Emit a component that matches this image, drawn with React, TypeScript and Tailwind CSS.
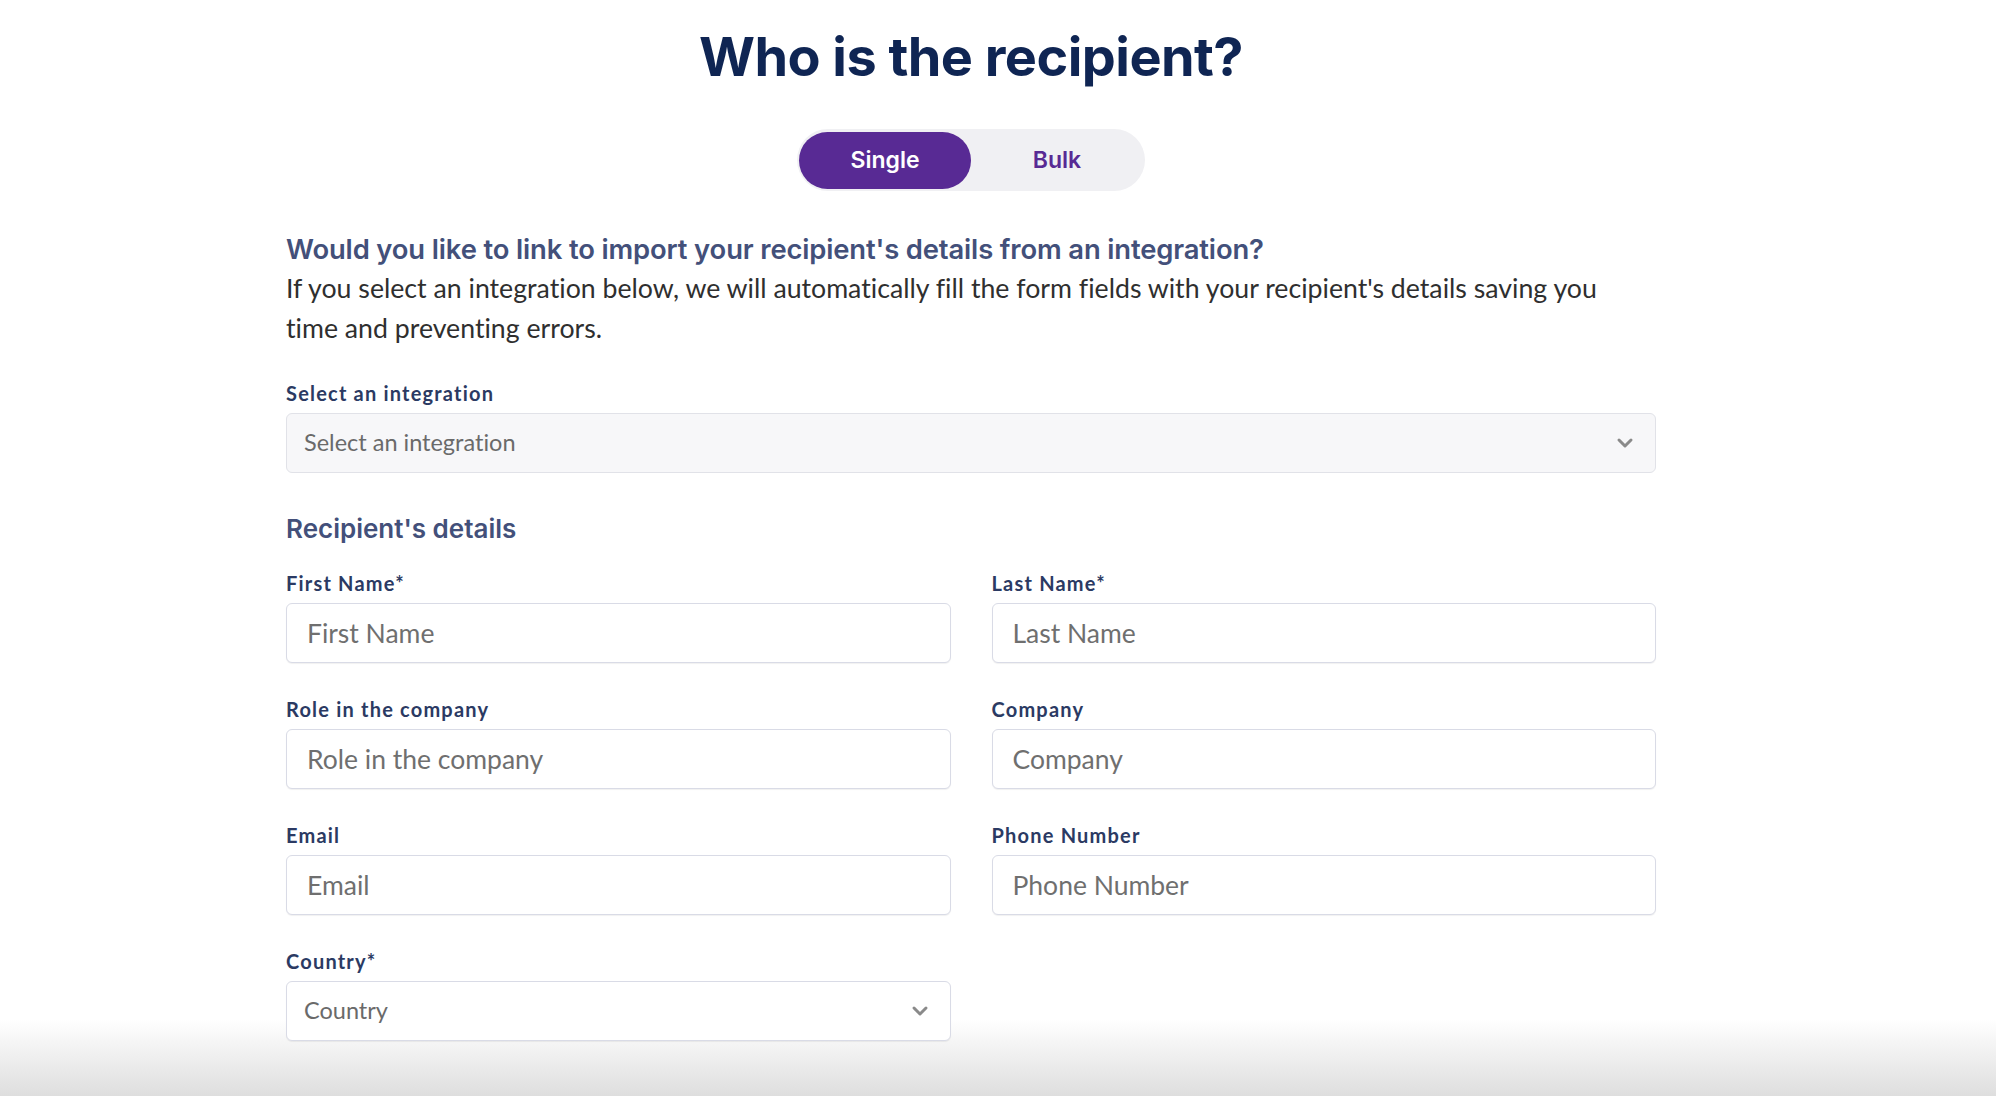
import { ChevronDown } from "lucide-react";

const heading = { fontFamily: "Inter, 'Noto Sans', sans-serif" };
const body = { fontFamily: "Lato, 'Liberation Sans', sans-serif", fontVariantLigatures: "none" as const };

function Field({ label, placeholder }: { label: string; placeholder: string }) {
  return (
    <div className="flex flex-col gap-[9px]">
      <label style={body} className="text-[20px] font-bold tracking-[0.06em] text-[#2b3a63] leading-[22px]">
        {label}
      </label>
      <input
        style={body}
        placeholder={placeholder}
        className="h-[60px] w-full rounded-[6px] border border-[#d9dbe6] bg-white px-5 text-[26.5px] text-[#333] placeholder:text-[#6f6f6f] shadow-[0_1px_1px_rgba(0,0,0,0.06)] outline-none"
      />
    </div>
  );
}

function SelectBox({ label, placeholder, muted }: { label: string; placeholder: string; muted?: boolean }) {
  return (
    <div className="flex flex-col gap-[9px]">
      <label style={body} className="text-[20px] font-bold tracking-[0.06em] text-[#2b3a63] leading-[22px]">
        {label}
      </label>
      <div
        className={`h-[60px] w-full rounded-[6px] border flex items-center justify-between pl-[17px] pr-[18px] ${
          muted ? "bg-[#f7f7f9] border-[#e1e2e8]" : "bg-white border-[#d9dbe6] shadow-[0_1px_1px_rgba(0,0,0,0.06)]"
        }`}
      >
        <span style={body} className="text-[23.5px] text-[#6a6a6a]">
          {placeholder}
        </span>
        <ChevronDown className="w-[24px] h-[24px] text-[#8a8a8a]" strokeWidth={3} />
      </div>
    </div>
  );
}

export default function App() {
  return (
    <div className="min-h-[1096px] w-full bg-[linear-gradient(to_bottom,#ffffff_93%,#dedede_100%)]">
      <div className="ml-[286px] w-[1370px] flex flex-col">
        <h1 style={heading} className="mt-[22px] text-center text-[54px] font-bold leading-[70px] tracking-[-0.01em] text-[#0f2553]">
          Who is the recipient?
        </h1>

        <div className="mt-[37px] flex justify-center">
          <div className="flex h-[62px] w-[348px] items-center rounded-full bg-[#f0f0f3] p-[2px]">
            <button style={heading} className="h-[57px] w-[172px] rounded-full bg-[#582a94] text-[23px] font-semibold text-white">
              Single
            </button>
            <button style={heading} className="h-[57px] flex-1 text-[23px] font-semibold text-[#582a94]">
              Bulk
            </button>
          </div>
        </div>

        <h2 style={heading} className="mt-[43px] text-[27.4px] font-semibold leading-[30px] tracking-[-0.005em] text-[#43507a]">
          Would you like to link to import your recipient's details from an integration?
        </h2>
        <p style={body} className="mt-[4px] w-[1340px] text-[26.7px] leading-[40px] text-[#2f2f2f]">
          If you select an integration below, we will automatically fill the form fields with your recipient's details saving you time and preventing errors.
        </p>

        <div className="mt-[34px]">
          <SelectBox label="Select an integration" placeholder="Select an integration" muted />
        </div>

        <h3 style={heading} className="mt-[39px] text-[26px] font-semibold leading-[34px] text-[#43507a]">
          Recipient's details
        </h3>

        <div className="mt-[26px] grid grid-cols-2 gap-x-[41px] gap-y-[35px]">
          <Field label="First Name*" placeholder="First Name" />
          <Field label="Last Name*" placeholder="Last Name" />
          <Field label="Role in the company" placeholder="Role in the company" />
          <Field label="Company" placeholder="Company" />
          <Field label="Email" placeholder="Email" />
          <Field label="Phone Number" placeholder="Phone Number" />
          <SelectBox label="Country*" placeholder="Country" />
        </div>
      </div>
    </div>
  );
}
